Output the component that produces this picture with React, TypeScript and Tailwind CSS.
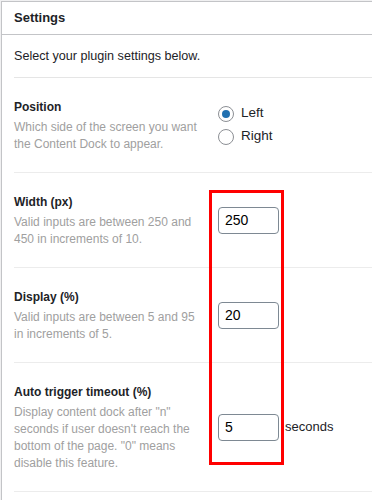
import { ReactNode } from 'react';

const font = { fontFamily: '"Liberation Sans", Arial, Helvetica, sans-serif' };

function Row({ label, desc, children }: { label: string; desc: string; children: ReactNode }) {
  return (
    <div className="flex items-center border-b border-[#ececec]">
      <div className="w-[204px] shrink-0 pt-[21px] pb-[19px] pr-[13px]">
        <div className="text-[12px] leading-[17px] font-bold text-[#1d2327]">{label}</div>
        <div className="mt-[3px] text-[12px] leading-[17px] text-[#a0a0a0]">{desc}</div>
      </div>
      <div className="flex items-center">{children}</div>
    </div>
  );
}

function NumberInput({ value }: { value: string }) {
  return (
    <input
      type="text"
      defaultValue={value}
      className="w-[61px] h-[27px] rounded-[4px] border border-[#7e8993] bg-white px-[6px] text-[14px] text-black outline-none"
    />
  );
}

function Radio({ label, checked }: { label: string; checked?: boolean }) {
  return (
    <label className="flex items-center gap-[7px] h-[22px]">
      <span className="w-[16px] h-[16px] rounded-full border border-[#8c8f94] bg-white flex items-center justify-center">
        {checked && <span className="w-[8px] h-[8px] rounded-full bg-[#2271b1]" />}
      </span>
      <span className="text-[13.5px] text-[#1d2327]">{label}</span>
    </label>
  );
}

export default function App() {
  return (
    <div className="w-[372px] h-[500px] overflow-hidden bg-[#f0f0f1] pt-px pl-px" style={font}>
      <div className="bg-white border-l border-t border-[#c3c4c7] h-full">
        {/* Header */}
        <div className="h-[33px] flex items-center px-[12px] border-b border-[#c3c4c7]">
          <h2 className="text-[13px] font-bold text-[#1d2327]">Settings</h2>
        </div>

        <div className="relative pl-[12px]">
          <p className="pt-[13px] pb-[12px] text-[12.6px] leading-[17px] text-[#1d2327] border-b border-[#e5e5e5]">
            Select your plugin settings below.
          </p>

          <Row label="Position" desc="Which side of the screen you want the Content Dock to appear.">
            <div className="flex flex-col gap-px">
              <Radio label="Left" checked />
              <Radio label="Right" />
            </div>
          </Row>

          <Row label="Width (px)" desc="Valid inputs are between 250 and 450 in increments of 10.">
            <NumberInput value="250" />
          </Row>

          <Row label="Display (%)" desc="Valid inputs are between 5 and 95 in increments of 5.">
            <NumberInput value="20" />
          </Row>

          <Row
            label="Auto trigger timeout (%)"
            desc={'Display content dock after "n" seconds if user doesn\'t reach the bottom of the page. "0" means disable this feature.'}
          >
            <NumberInput value="5" />
            <span className="ml-[6px] text-[13px] text-[#1d2327]">seconds</span>
          </Row>

          {/* Red highlight annotation */}
          <div className="absolute left-[207px] top-[155px] w-[75px] h-[275px] border-[3px] border-[#ff0000] pointer-events-none" />
        </div>
      </div>
    </div>
  );
}
